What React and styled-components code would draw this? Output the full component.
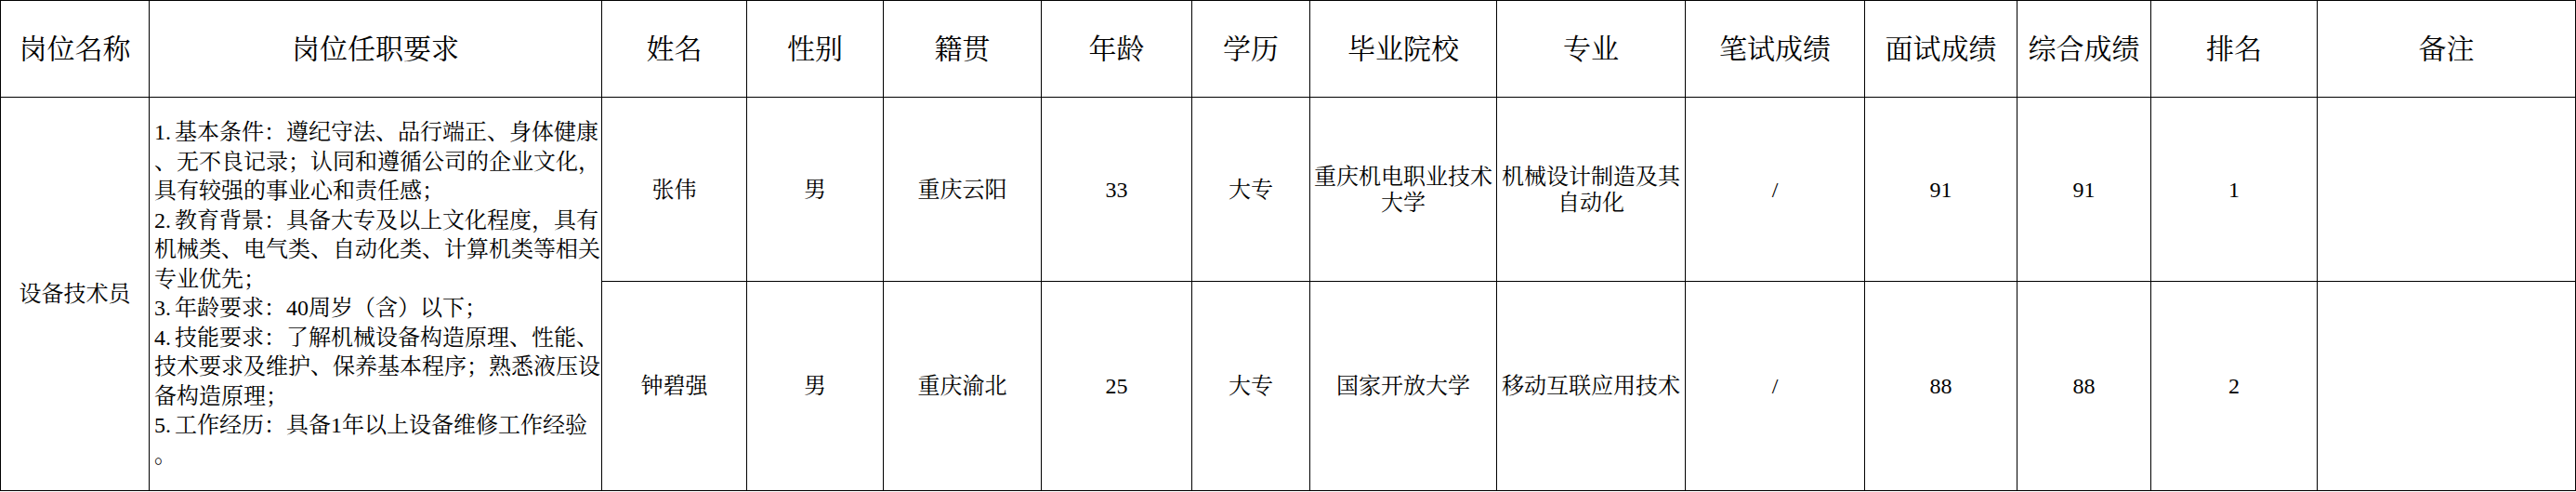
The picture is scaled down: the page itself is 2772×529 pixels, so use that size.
import styled, { createGlobalStyle } from "styled-components";

const GlobalStyle = createGlobalStyle`
  html, body {
    margin: 0;
    padding: 0;
    background: #ffffff;
  }
  body {
    font-family: "Liberation Serif", "Noto Serif CJK SC", "Noto Sans CJK SC", serif;
    color: #000000;
  }
`;

const Sheet = styled.table`
  table-layout: fixed;
  border-collapse: collapse;
  width: 2771px;
  background: #ffffff;
`;

const HeadRow = styled.tr`
  height: 104px;
`;

const BodyRow = styled.tr`
  height: ${({ $h }) => $h}px;
`;

const HeadCell = styled.th`
  border: 1px solid #000000;
  padding: 0 4px;
  font-size: 30px;
  font-weight: 400;
  line-height: 34px;
  text-align: center;
  vertical-align: middle;
  white-space: nowrap;
`;

const Cell = styled.td`
  border: 1px solid #000000;
  padding: 0 4px;
  font-size: 24px;
  line-height: 28px;
  text-align: center;
  vertical-align: middle;
  white-space: nowrap;
`;

const ReqCell = styled(Cell)`
  text-align: left;
  line-height: 31.5px;
  padding: 0 4px 0 5px;
`;

const Line = styled.div`
  white-space: nowrap;
`;

const Num = styled.span`
  margin-right: 4px;
`;

const columns = [160, 487, 156, 147, 170, 162, 127, 201, 203, 193, 164, 144, 179, 278];

const headers = [
  "岗位名称",
  "岗位任职要求",
  "姓名",
  "性别",
  "籍贯",
  "年龄",
  "学历",
  "毕业院校",
  "专业",
  "笔试成绩",
  "面试成绩",
  "综合成绩",
  "排名",
  "备注"
];

// [leading number, rest of the line]
const requirements = [
  ["1.", "基本条件：遵纪守法、品行端正、身体健康"],
  ["", "、无不良记录；认同和遵循公司的企业文化，"],
  ["", "具有较强的事业心和责任感；"],
  ["2.", "教育背景：具备大专及以上文化程度，具有"],
  ["", "机械类、电气类、自动化类、计算机类等相关"],
  ["", "专业优先；"],
  ["3.", "年龄要求：40周岁（含）以下；"],
  ["4.", "技能要求：了解机械设备构造原理、性能、"],
  ["", "技术要求及维护、保养基本程序；熟悉液压设"],
  ["", "备构造原理；"],
  ["5.", "工作经历：具备1年以上设备维修工作经验"],
  ["", "。"]
];

const candidates = [
  {
    height: 198,
    cells: [
      ["张伟"],
      ["男"],
      ["重庆云阳"],
      ["33"],
      ["大专"],
      ["重庆机电职业技术", "大学"],
      ["机械设计制造及其", "自动化"],
      ["/"],
      ["91"],
      ["91"],
      ["1"],
      [""]
    ]
  },
  {
    height: 225,
    cells: [
      ["钟碧强"],
      ["男"],
      ["重庆渝北"],
      ["25"],
      ["大专"],
      ["国家开放大学"],
      ["移动互联应用技术"],
      ["/"],
      ["88"],
      ["88"],
      ["2"],
      [""]
    ]
  }
];

const App = () => {
  return (
    <>
      <GlobalStyle />
      <Sheet>
        <colgroup>
          {columns.map((w, i) => (
            <col key={i} style={{ width: `${w}px` }} />
          ))}
        </colgroup>
        <thead>
          <HeadRow>
            {headers.map((h) => (
              <HeadCell key={h}>{h}</HeadCell>
            ))}
          </HeadRow>
        </thead>
        <tbody>
          {candidates.map((row, r) => (
            <BodyRow key={r} $h={row.height}>
              {r === 0 && (
                <>
                  <Cell rowSpan={2}>设备技术员</Cell>
                  <ReqCell rowSpan={2}>
                    {requirements.map(([num, text], i) => (
                      <Line key={i}>
                        {num && <Num>{num}</Num>}
                        {text}
                      </Line>
                    ))}
                  </ReqCell>
                </>
              )}
              {row.cells.map((lines, c) => (
                <Cell key={c}>
                  {lines.map((line, i) => (
                    <Line key={i}>{line}</Line>
                  ))}
                </Cell>
              ))}
            </BodyRow>
          ))}
        </tbody>
      </Sheet>
    </>
  );
};

export default App;
